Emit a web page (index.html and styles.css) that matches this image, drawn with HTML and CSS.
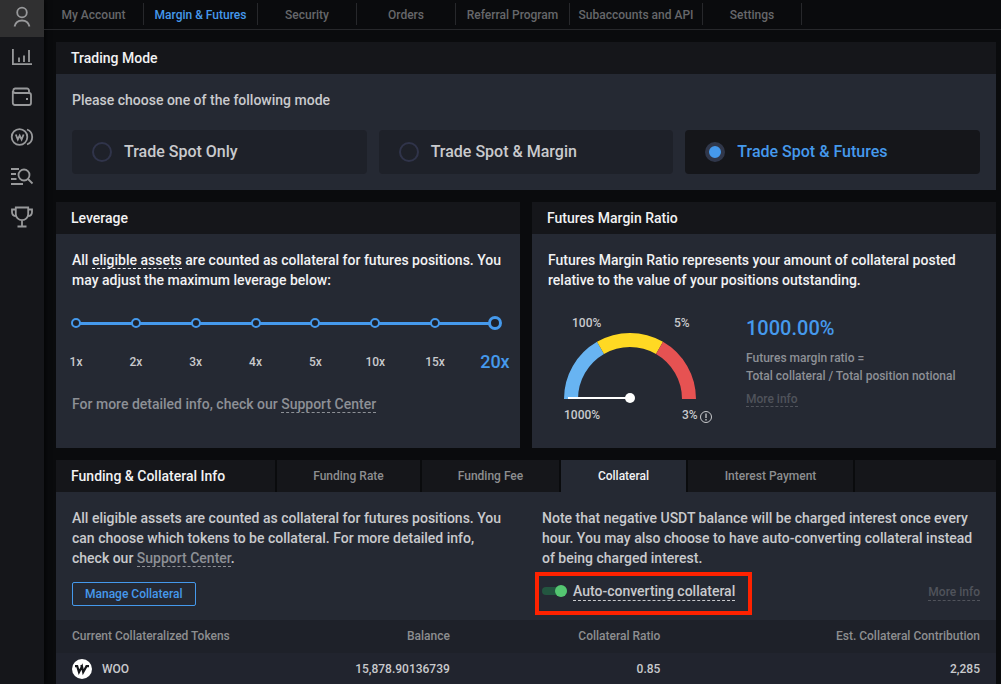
FILE: index.html
```html
<!DOCTYPE html>
<html lang="en">
<head>
    <meta charset="UTF-8">
    <meta name="viewport" content="width=device-width, initial-scale=1.0">
    <title>Margin &amp; Futures</title>
    <link rel="stylesheet" href="styles.css">
</head>
<body>

    <div class="page">
        <aside class="sidebar">
            <a href="#" class="side-link active" aria-label="Account">
                <svg width="24" height="24" viewBox="0 0 24 24"><circle cx="12" cy="7.500" r="4.800"/><path d="M4.500 21.500c1-4 4-6 7.500-6s6.500 2 7.500 6"/></svg>
            </a>
            <a href="#" class="side-link" aria-label="Markets">
                <svg width="24" height="24" viewBox="0 0 24 24"><path d="M2.900 4v15.200H22M9 12.500V17M14 10.500V17M19 5v12"/></svg>
            </a>
            <a href="#" class="side-link" aria-label="Wallet">
                <svg width="24" height="24" viewBox="0 0 24 24"><path d="M19 8V5.500a2 2 0 0 0-2-2H5A2.300 2.300 0 0 0 5 8h14a2 2 0 0 1 2 2v8a2 2 0 0 1-2 2H5a2.200 2.200 0 0 1-2.200-2.200V6"/><path d="M16 14h2"/></svg>
            </a>
            <a href="#" class="side-link" aria-label="Staking">
                <svg width="24" height="24" viewBox="0 0 24 24"><circle cx="9.500" cy="12" r="7.800"/><path d="M5.800 9.500l2 5 1.900-4 1.900 4 2-5M17 4.500a8 8 0 0 1 0 15"/></svg>
            </a>
            <a href="#" class="side-link" aria-label="Order history">
                <svg width="24" height="24" viewBox="0 0 24 24"><path d="M1 4h8M1 9h5M1 14h5.500M1 19h12"/><circle cx="14" cy="10" r="5.500"/><path d="M18 14l4.500 4.500"/></svg>
            </a>
            <a href="#" class="side-link" aria-label="Competitions">
                <svg width="24" height="24" viewBox="0 0 24 24"><path d="M5.800 2.500h12.400V9a6.200 6.200 0 0 1-12.400 0zM5.800 4.500H2v2.500c0 2.500 1.500 4 4.300 4.200M18.200 4.500H22v2.500c0 2.500-1.500 4-4.300 4.200M12 15.500V21M7.500 21.500h9"/></svg>
            </a>
        </aside>

        <main class="main">
            <nav class="top-nav">
                <a href="#">My Account</a>
                <a href="#" class="active">Margin &amp; Futures</a>
                <a href="#">Security</a>
                <a href="#">Orders</a>
                <a href="#">Referral Program</a>
                <a href="#">Subaccounts and API</a>
                <a href="#">Settings</a>
            </nav>

            <div class="content">
                <section class="card">
                    <h2 class="card-title">Trading Mode</h2>
                    <div class="card-body">
                        <p>Please choose one of the following mode</p>
                        <div class="modes">
                            <label class="mode"><input type="radio" name="mode">Trade Spot Only</label>
                            <label class="mode"><input type="radio" name="mode">Trade Spot &amp; Margin</label>
                            <label class="mode selected"><input type="radio" name="mode" checked>Trade Spot &amp; Futures</label>
                        </div>
                    </div>
                </section>

                <div class="card-row">
                    <section class="card">
                        <h2 class="card-title">Leverage</h2>
                        <div class="card-body">
                            <p class="bright">All <span class="hint">eligible assets</span> are counted as collateral for futures positions. You may adjust the maximum leverage below:</p>
                            <div class="slider">
                                <input type="range" min="1" max="8" value="8" aria-label="Maximum leverage">
                                <div class="dots">
                                    <i></i><i></i><i></i><i></i><i></i><i></i><i></i><b></b>
                                </div>
                            </div>
                            <div class="ticks">
                                <span>1x</span>
                                <span>2x</span>
                                <span>3x</span>
                                <span>4x</span>
                                <span>5x</span>
                                <span>10x</span>
                                <span>15x</span>
                                <span class="current">20x</span>
                            </div>
                            <p class="muted">For more detailed info, check our <a href="#" class="hint">Support Center</a></p>
                        </div>
                    </section>

                    <section class="card">
                        <h2 class="card-title">Futures Margin Ratio</h2>
                        <div class="card-body">
                            <p class="bright">Futures Margin Ratio represents your amount of collateral posted relative to the value of your positions outstanding.</p>
                            <div class="ratio">
                                <svg class="gauge" width="174" height="120" viewBox="0 0 174 120">
                                    <path fill="#68b4f2" d="M16 89A66 66 0 0 1 49 31.800L56 44A52 52 0 0 0 30 89z"/>
                                    <path fill="#ffd923" d="M49 31.800A66 66 0 0 1 115 31.800L108 44A52 52 0 0 0 56 44z"/>
                                    <path fill="#e65252" d="M115 31.800A66 66 0 0 1 148 89H134A52 52 0 0 0 108 44z"/>
                                    <path stroke="#fff" stroke-width="2" d="M20 88h62"/>
                                    <circle cx="82" cy="88" r="5" fill="#fff"/>
                                    <text x="24" y="17">100%</text>
                                    <text x="126" y="17">5%</text>
                                    <text x="16" y="109">1000%</text>
                                    <text x="134" y="109">3%</text>
                                    <circle cx="158" cy="107" r="5.500" fill="none" stroke="#c9cacd"/>
                                    <path stroke="#c9cacd" stroke-width="1.300" d="M158 103.500v4.500M158 109v1.500"/>
                                </svg>
                                <div class="ratio-info">
                                    <strong>1000.00%</strong>
                                    <p>Futures margin ratio =<br>Total collateral / Total position notional</p>
                                    <a href="#" class="hint more">More info</a>
                                </div>
                            </div>
                        </div>
                    </section>
                </div>

                <section class="card">
                    <div class="tabs">
                        <h2 class="card-title">Funding &amp; Collateral Info</h2>
                        <button type="button">Funding Rate</button>
                        <button type="button">Funding Fee</button>
                        <button type="button" class="active">Collateral</button>
                        <button type="button">Interest Payment</button>
                        <span></span>
                    </div>
                    <div class="card-body collateral">
                        <div>
                            <p>All eligible assets are counted as collateral for futures positions. You can choose which tokens to be collateral. For more detailed info, check our <a href="#" class="hint muted">Support Center</a>.</p>
                            <button type="button" class="manage">Manage Collateral</button>
                        </div>
                        <div>
                            <p>Note that negative USDT balance will be charged interest once every hour. You may also choose to have auto-converting collateral instead of being charged interest.</p>
                            <div class="convert">
                                <label class="switch">
                                    <input type="checkbox" checked>
                                    <span class="hint">Auto-converting collateral</span>
                                </label>
                                <a href="#" class="hint more">More info</a>
                            </div>
                        </div>
                    </div>
                    <table class="tokens">
                        <thead>
                            <tr>
                                <th>Current Collateralized Tokens</th>
                                <th>Balance</th>
                                <th>Collateral Ratio</th>
                                <th>Est. Collateral Contribution</th>
                            </tr>
                        </thead>
                        <tbody>
                            <tr>
                                <td>
                                    <div class="token">
                                        <svg width="20" height="20" viewBox="0 0 20 20"><circle cx="10" cy="10" r="10" fill="#fff"/><path fill="none" stroke="#15161a" stroke-width="2.200" d="M3 7.200h2.200l1.800 6 3-5.700 1.200 5.700L14.500 7.200H17M8.500 7.200h2"/></svg>
                                        WOO
                                    </div>
                                </td>
                                <td>15,878.90136739</td>
                                <td>0.85</td>
                                <td>2,285</td>
                            </tr>
                        </tbody>
                    </table>
                </section>
            </div>
        </main>
    </div>

</body>
</html>
```

FILE: styles.css
```css
* {
    box-sizing: border-box;
}
body {
    margin: 0;
    background-color: #0a0b0d;
    color: #c9cacd;
    font-family: Roboto, sans-serif;
    font-size: 14px;
    font-weight: 500;
    line-height: 20px;
}
h2, p {
    margin: 0;
}
button, input {
    font: inherit;
    margin: 0;
}
a {
    color: inherit;
    text-decoration: none;
}
.page {
    display: flex;
    height: 100vh;
    overflow: hidden;
}

/* sidebar */
.sidebar {
    flex: 0 0 44px;
    background-color: #15161a;
    box-shadow: 0 0 6px #000;
}
.side-link {
    display: flex;
    align-items: center;
    justify-content: center;
    height: 40px;
}
.side-link.active {
    height: 37px;
    padding-bottom: 4px;
    background-color: #303031;
}
.side-link svg {
    fill: none;
    stroke: #98999b;
    stroke-width: 1.8;
}

/* top navigation */
.main {
    flex: 1;
    min-width: 0;
}
.top-nav {
    display: grid;
    grid-template-columns: 100px 114px 99px 99px 114px 133px 99px;
    padding: 3px 0 4px;
    border-bottom: 1px solid #27282b;
    color: #66676a;
    font-size: 12px;
}
.top-nav a {
    height: 22px;
    border-right: 1px solid #27282b;
    line-height: 24px;
    text-align: center;
    white-space: nowrap;
}
.top-nav .active {
    color: #4599ec;
}

/* cards */
.content {
    display: flex;
    flex-direction: column;
    gap: 12px;
    padding: 12px 5px 0 12px;
}
.card {
    background-color: #252933;
}
.card-row {
    display: grid;
    grid-template-columns: 1fr 1fr;
    gap: 12px;
}
.card-title {
    padding: 0 15px;
    background-color: #15161a;
    color: #f2f2f3;
    font-size: 14px;
    font-weight: 500;
    line-height: 32px;
}
.card-body {
    padding: 16px;
}
.bright {
    color: #f2f2f3;
}
.muted {
    color: #8d9096;
}
.hint {
    border-bottom: 1px dashed currentColor;
}
.more {
    color: #50535b;
    font-size: 12px;
    line-height: 16px;
}

/* trading mode */
.modes {
    display: grid;
    grid-template-columns: repeat(3, 1fr);
    gap: 12px;
    margin-top: 20px;
}
.mode {
    display: flex;
    align-items: center;
    gap: 12px;
    height: 44px;
    padding: 0 20px;
    border-radius: 4px;
    background-color: #1e2129;
    font-size: 16px;
    line-height: 22px;
}
.mode input {
    appearance: none;
    width: 20px;
    height: 20px;
    border: 2px solid #30344a;
    border-radius: 50%;
}
.mode.selected {
    background-color: #15161a;
    color: #4599ec;
}
.mode input:checked {
    border: 4px solid #30374a;
    background-color: #4599ec;
}

/* leverage slider */
.slider {
    display: grid;
    align-items: center;
    margin: 26px 2px 0 -3px;
}
.slider input,
.dots {
    grid-area: 1 / 1;
}
.slider input {
    appearance: none;
    width: 100%;
    height: 14px;
    background: linear-gradient(#4599ec, #4599ec) center / calc(100% - 14px) 3px no-repeat;
}
.slider input::-webkit-slider-thumb {
    appearance: none;
    width: 14px;
    height: 14px;
    border: 3px solid #4599ec;
    border-radius: 50%;
    background-color: #1e2129;
}
.dots,
.ticks {
    display: flex;
    justify-content: space-between;
}
.dots {
    pointer-events: none;
}
.dots i {
    width: 10px;
    height: 10px;
    margin: 0 2px;
    border: 2px solid #4599ec;
    border-radius: 50%;
    background-color: #1e2129;
}
.dots b {
    width: 14px;
}
.ticks {
    margin: 22px 2px 22px -3px;
    font-size: 12px;
}
.ticks span {
    display: flex;
    justify-content: center;
    width: 14px;
}
.ticks .current {
    color: #4599ec;
    font-size: 18px;
}

/* margin ratio */
.ratio {
    display: flex;
    gap: 24px;
    margin-top: 20px;
    padding-bottom: 2px;
}
.gauge text {
    fill: #c9cacd;
    font-size: 12px;
}
.ratio-info {
    padding-top: 8px;
    color: #8d9096;
    font-size: 12px;
    line-height: 18px;
}
.ratio-info strong {
    display: block;
    margin-bottom: 11px;
    color: #4599ec;
    font-size: 20px;
    font-weight: 500;
    line-height: 20px;
}
.ratio-info p {
    margin-bottom: 5px;
}

/* funding and collateral */
.tabs {
    display: grid;
    grid-template-columns: 219px 143px 137px 125px 165px 1fr;
    gap: 2px;
    background-color: #0a0b0d;
}
.tabs button,
.tabs span {
    padding: 0;
    border: none;
    background-color: #15161a;
    color: #8d8e90;
    font-size: 12px;
}
.tabs .active {
    background-color: #252933;
    color: #f2f2f3;
}
.collateral {
    display: grid;
    grid-template-columns: 1fr 1fr;
    gap: 32px;
    padding-bottom: 5px;
}
.manage {
    height: 24px;
    margin-top: 14px;
    padding: 0 12px;
    border: 1px solid #4599ec;
    border-radius: 2px;
    background: none;
    color: #4599ec;
    font-size: 12px;
    line-height: 20px;
}
.convert {
    display: flex;
    align-items: center;
    justify-content: space-between;
    margin: 4px 0 0 -7px;
}
.convert .more {
    margin-bottom: 3px;
}
.switch {
    display: flex;
    align-items: center;
    gap: 6px;
    height: 43px;
    padding: 0 13px 5px 3px;
    border: 4px solid #ff2200;
}
.switch .hint {
    line-height: 18px;
}
.switch input {
    appearance: none;
    display: flex;
    align-items: center;
    justify-content: flex-end;
    width: 25px;
    height: 8px;
    border-radius: 4px;
    background-color: #235640;
}
.switch input::before {
    content: "";
    width: 12px;
    height: 12px;
    border-radius: 50%;
    background-color: #54c671;
}
.tokens {
    width: 100%;
    border-collapse: collapse;
    table-layout: fixed;
    background-color: #21242e;
    font-size: 12px;
    text-align: right;
}
.tokens th,
.tokens td {
    height: 33px;
    padding: 0 16px 2px 0;
    font-weight: 500;
    white-space: nowrap;
}
.tokens th {
    background-color: #1e2129;
    color: #8d8e90;
}
.tokens th:first-child,
.tokens td:first-child {
    width: 22%;
    padding-left: 16px;
    text-align: left;
}
.tokens th:nth-child(2) {
    width: 21.6%;
}
.tokens th:nth-child(3) {
    width: 22.4%;
}
.token {
    display: flex;
    align-items: center;
    gap: 10px;
}
```
